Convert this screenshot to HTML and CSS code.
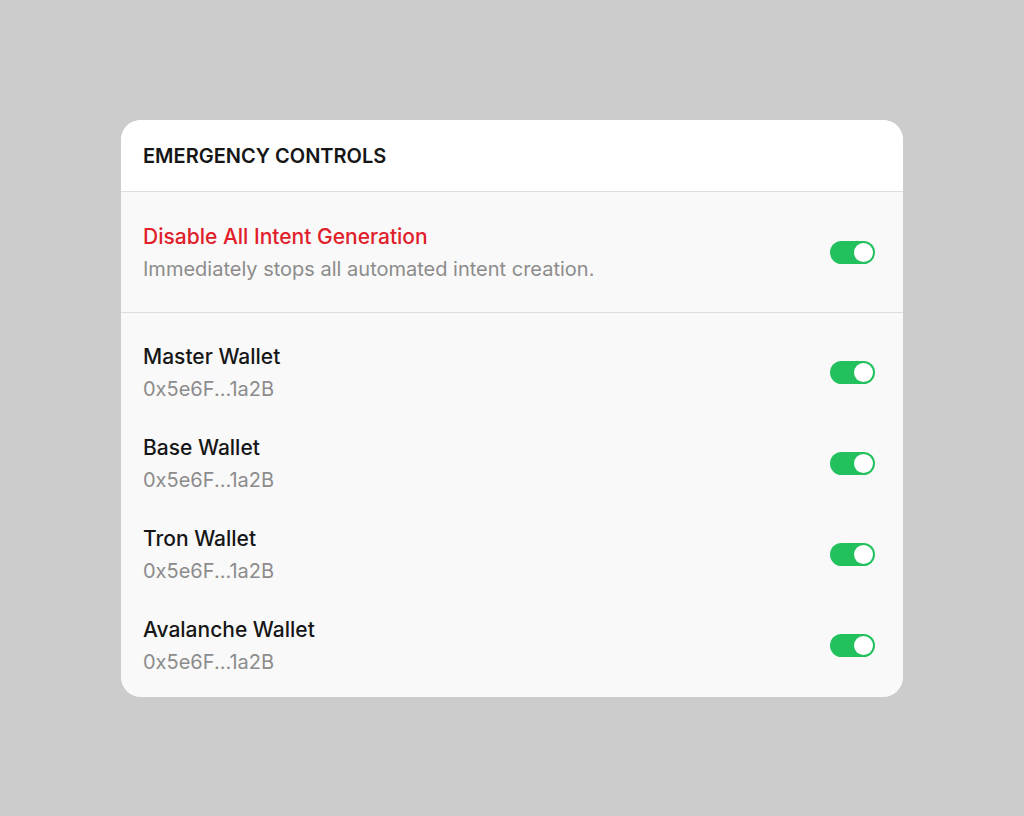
FILE: index.html
```html
<!DOCTYPE html>
<html lang="en">
  <head>
    <title>Emergency Controls</title>
    <meta charset="UTF-8"/>
    <link rel="stylesheet" href="styles.css">
  </head>
  <body>
    <div class="card">
      <div class="card-head">EMERGENCY CONTROLS</div>

      <div class="kill-switch">
        <div class="row">
          <div class="info">
            <div class="title danger">Disable All Intent Generation</div>
            <div class="sub">Immediately stops all automated intent creation.</div>
          </div>
          <span class="toggle on"></span>
        </div>
      </div>

      <div class="wallets">
        <div class="row">
          <div class="info">
            <div class="title">Master Wallet</div>
            <div class="sub">0x5e6F...1a2B</div>
          </div>
          <span class="toggle on"></span>
        </div>
        <div class="row">
          <div class="info">
            <div class="title">Base Wallet</div>
            <div class="sub">0x5e6F...1a2B</div>
          </div>
          <span class="toggle on"></span>
        </div>
        <div class="row">
          <div class="info">
            <div class="title">Tron Wallet</div>
            <div class="sub">0x5e6F...1a2B</div>
          </div>
          <span class="toggle on"></span>
        </div>
        <div class="row">
          <div class="info">
            <div class="title">Avalanche Wallet</div>
            <div class="sub">0x5e6F...1a2B</div>
          </div>
          <span class="toggle on"></span>
        </div>
      </div>
    </div>
  </body>
</html>
```

FILE: styles.css
```css
body {
  margin: 0;
  background: #cccccc;
  font-family: "Inter", "Noto Sans", sans-serif;
  min-height: 816px;
  display: flex;
  justify-content: center;
  align-items: flex-start;
}
.card {
  margin-top: 120px;
  width: 782px;
  height: 577px;
  background: #f9f9f9;
  border-radius: 20px;
  overflow: hidden;
  display: flex;
  flex-direction: column;
}
.card-head {
  height: 71px;
  background: #ffffff;
  border-bottom: 1px solid #dddddd;
  padding-left: 22px;
  display: flex;
  align-items: center;
  font-size: 20px;
  font-weight: 600;
  color: #161616;
}
.kill-switch {
  height: 119px;
  border-bottom: 1px solid #dddddd;
  padding: 1px 28px 0 22px;
  display: flex;
  flex-direction: column;
  justify-content: center;
}
.wallets {
  padding: 14px 28px 5px 22px;
  display: flex;
  flex-direction: column;
}
.wallets .row {
  height: 91px;
}
.row {
  display: flex;
  align-items: center;
  justify-content: space-between;
}
.info {
  display: flex;
  flex-direction: column;
  gap: 8px;
}
.title {
  font-size: 21px;
  line-height: 24px;
  font-weight: 500;
  color: #161616;
}
.title.danger {
  color: #e0202a;
}
.sub {
  font-size: 20px;
  line-height: 24px;
  color: #8c8c8c;
}
/* switch: green track, white knob on the right */
.toggle {
  position: relative;
  width: 45px;
  height: 23px;
  border-radius: 12px;
  background: #d4d4d4;
}
.toggle.on {
  background: #22c15e;
}
.toggle::after {
  content: "";
  position: absolute;
  top: 2px;
  left: 2px;
  width: 19px;
  height: 19px;
  border-radius: 50%;
  background: #ffffff;
}
.toggle.on::after {
  left: 24px;
}
```
